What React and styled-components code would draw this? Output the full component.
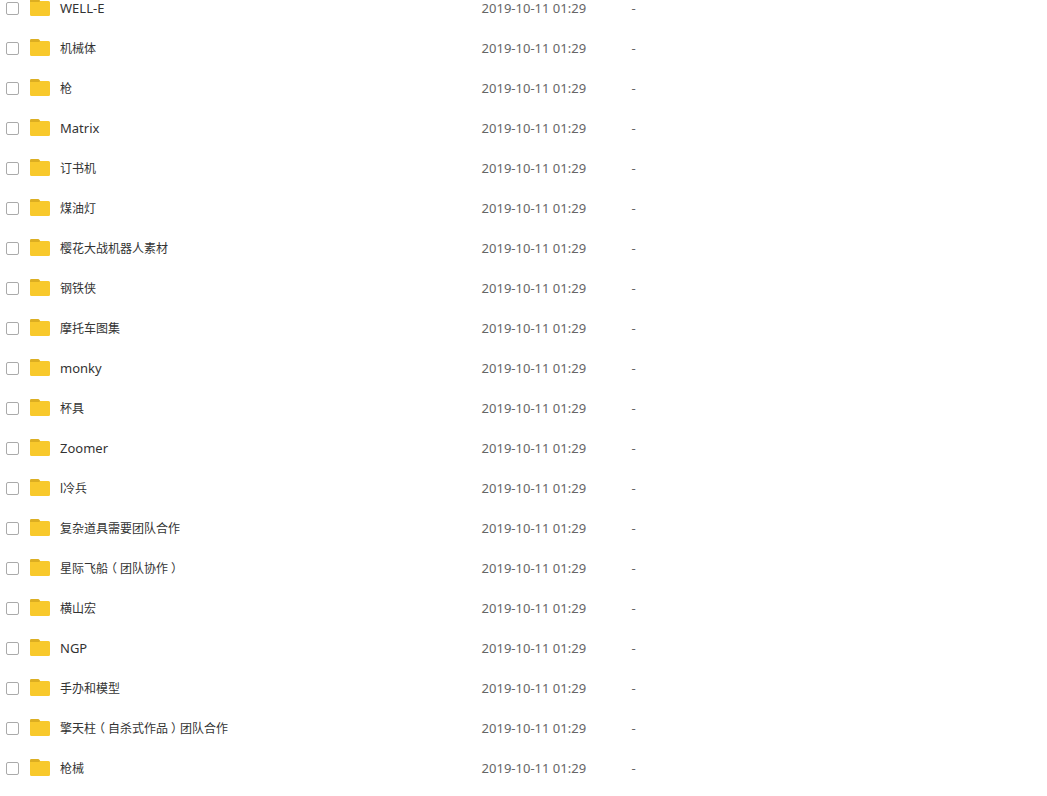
import React from 'react';
import styled, { createGlobalStyle } from 'styled-components';

const files = [
  'WELL-E',
  '机械体',
  '枪',
  'Matrix',
  '订书机',
  '煤油灯',
  '樱花大战机器人素材',
  '钢铁侠',
  '摩托车图集',
  'monky',
  '杯具',
  'Zoomer',
  'l冷兵',
  '复杂道具需要团队合作',
  '星际飞船（团队协作）',
  '横山宏',
  'NGP',
  '手办和模型',
  '擎天柱（自杀式作品）团队合作',
  '枪械',
];

const isLatin = (name) => /^[\w-]+$/.test(name);

const FolderIcon = () => (
  <Folder viewBox="0 0 20 17" aria-hidden="true">
    <path d="M0 4V1.2Q0 0 1.2 0H8Q9 0 9.6 1L10.6 3V4z" fill="#dcae22" />
    <path d="M0 3H9Q9.6 3 10 2H18.5Q20 2 20 3.5V15.5Q20 17 18.5 17H1.5Q0 17 0 15.5z" fill="#f8c92c" />
  </Folder>
);

// full-width brackets are drawn centred in their box
const renderName = (name) =>
  name.split(/([（）])/).map((part, i) => (
    /[（）]/.test(part) ? <Bracket key={i}>{part}</Bracket> : part
  ));

const App = () => {
  return (
    <>
      <GlobalStyle />
      <Table>
        <colgroup>
          <NameCol />
          <DateCol />
          <col />
        </colgroup>
        <tbody>
          {files.map((name, index) => (
            <Row key={name}>
              <Cell>
                <NameCell>
                  <Checkbox type="checkbox" id={`file-${index}`} />
                  <FolderIcon />
                  <FileName htmlFor={`file-${index}`} $latin={isLatin(name)}>
                    {renderName(name)}
                  </FileName>
                </NameCell>
              </Cell>
              <MetaCell>2019-10-11 01:29</MetaCell>
              <MetaCell>-</MetaCell>
            </Row>
          ))}
        </tbody>
      </Table>
    </>
  );
};

export default App;

const GlobalStyle = createGlobalStyle`
  body {
    margin: 0;
    overflow: hidden;
    background: #fff;
    font-family: "Noto Sans", "Noto Sans CJK SC", sans-serif;
    font-size: 12px;
  }
`

const Table = styled.table`
  width: 100%;
  margin-top: -12px;
  table-layout: fixed;
  border-collapse: collapse;
`

const NameCol = styled.col`
  width: 46%;
`

const DateCol = styled.col`
  width: 150px;
`

const Row = styled.tr`
  height: 40px;
`

const Cell = styled.td`
  padding: 0;
`

const NameCell = styled.div`
  display: flex;
  align-items: center;
  height: 40px;
  padding-left: 6px;
`

const Checkbox = styled.input`
  appearance: none;
  box-sizing: border-box;
  flex: none;
  width: 13px;
  height: 13px;
  margin: 1px 11px 0 0;
  border: 1px solid #aaa;
  border-radius: 2px;
  background: #fff;
`

const Folder = styled.svg`
  flex: none;
  width: 20px;
  height: 17px;
  margin: 0 10px 1px 0;
`

const FileName = styled.label`
  padding-top: ${(props) => (props.$latin ? '0' : '2px')};
  color: #333;
  font-size: ${(props) => (props.$latin ? '13px' : '12px')};
  line-height: 20px;
  white-space: nowrap;
`

const Bracket = styled.span`
  display: inline-block;
  width: 12px;
  font-feature-settings: "halt";
  text-align: center;
`

const MetaCell = styled(Cell)`
  color: #666;
  font-size: 13px;
  line-height: 20px;
`
